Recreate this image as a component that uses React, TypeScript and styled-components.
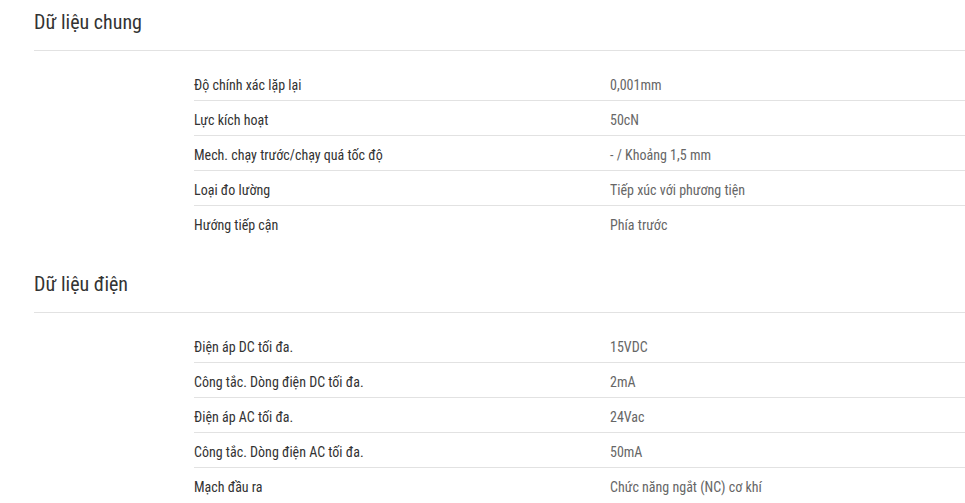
import React from "react";
import styled, { createGlobalStyle } from "styled-components";

const Global = createGlobalStyle`
  html, body { margin: 0; padding: 0; background: #fff; }
  body { font-family: "Roboto Condensed", Roboto, "Liberation Sans", sans-serif; font-stretch: condensed; }
`;

const Page = styled.div`
  display: flex;
  flex-direction: column;
  gap: 21px;
  padding-left: 34px;
`;

const Section = styled.section`
  display: flex;
  flex-direction: column;
`;

const Heading = styled.h2`
  margin: 0;
  height: 51px;
  box-sizing: border-box;
  padding-top: 9px;
  border-bottom: 1px solid #e2e2e2;
  font-size: 20px;
  font-weight: 400;
  line-height: 26px;
  color: #333;
`;

const Table = styled.div`
  display: flex;
  flex-direction: column;
  margin-top: 15px;
  margin-left: 160px;
`;

const Row = styled.div<{ $last?: boolean }>`
  display: grid;
  grid-template-columns: 416px 1fr;
  height: 35px;
  box-sizing: border-box;
  align-items: center;
  padding-top: 3px;
  border-bottom: ${(p) => (p.$last ? "none" : "1px solid #e2e2e2")};
  font-size: 14px;
`;

const Label = styled.span`
  color: #333;
`;

const Value = styled.span`
  color: #666;
`;

const sections: { title: string; rows: [string, string][] }[] = [
  {
    title: "Dữ liệu chung",
    rows: [
      ["Độ chính xác lặp lại", "0,001mm"],
      ["Lực kích hoạt", "50cN"],
      ["Mech. chạy trước/chạy quá tốc độ", "- / Khoảng 1,5 mm"],
      ["Loại đo lường", "Tiếp xúc với phương tiện"],
      ["Hướng tiếp cận", "Phía trước"],
    ],
  },
  {
    title: "Dữ liệu điện",
    rows: [
      ["Điện áp DC tối đa.", "15VDC"],
      ["Công tắc. Dòng điện DC tối đa.", "2mA"],
      ["Điện áp AC tối đa.", "24Vac"],
      ["Công tắc. Dòng điện AC tối đa.", "50mA"],
      ["Mạch đầu ra", "Chức năng ngắt (NC) cơ khí"],
    ],
  },
];

export default function App() {
  return (
    <>
      <Global />
      <Page>
        {sections.map((s) => (
          <Section key={s.title}>
            <Heading>{s.title}</Heading>
            <Table>
              {s.rows.map(([l, v], i) => (
                <Row key={l} $last={i === s.rows.length - 1}>
                  <Label>{l}</Label>
                  <Value>{v}</Value>
                </Row>
              ))}
            </Table>
          </Section>
        ))}
      </Page>
    </>
  );
}
